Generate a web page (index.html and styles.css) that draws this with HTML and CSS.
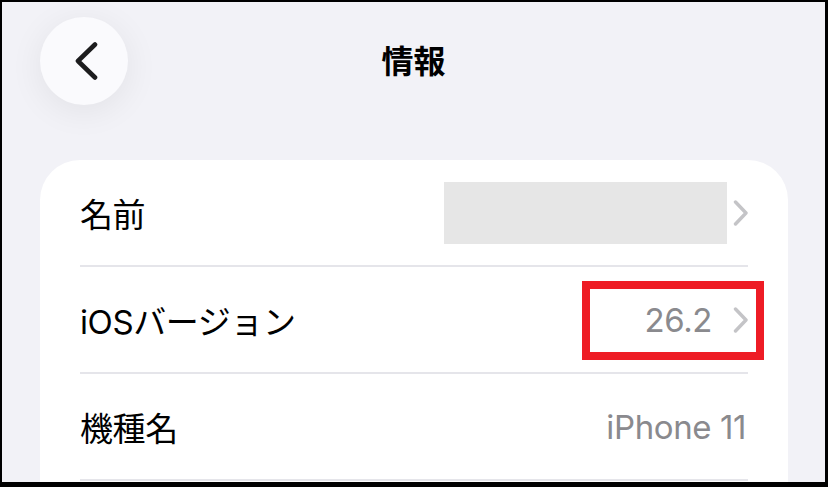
FILE: index.html
```html
<!DOCTYPE html>
<html lang="ja">
<head>
<meta charset="utf-8">
<title>情報</title>
<link rel="stylesheet" href="styles.css">
</head>
<body>
<div class="screen">
  <header class="nav">
    <button class="back" aria-label="戻る">
      <svg width="24" height="38" viewBox="0 0 24 38"><path d="M21 2.5 L4 19 L21 35.5" fill="none" stroke="#1c1c1e" stroke-width="4.6" stroke-linecap="round" stroke-linejoin="round"/></svg>
    </button>
    <h1 class="title">情報</h1>
    <div></div>
  </header>
  <section class="card">
    <div class="row">
      <span class="label">名前</span>
      <span class="value">
        <span class="blank"></span>
        <svg class="chev" width="16" height="26" viewBox="0 0 16 26"><path d="M2.5 2 L13 13 L2.5 24" fill="none" stroke="#c4c4c7" stroke-width="3.4" stroke-linecap="round" stroke-linejoin="round"/></svg>
      </span>
    </div>
    <div class="row">
      <span class="label">iOSバージョン</span>
      <span class="value">
        <span class="val">26.2</span>
        <svg class="chev" width="16" height="26" viewBox="0 0 16 26"><path d="M2.5 2 L13 13 L2.5 24" fill="none" stroke="#c4c4c7" stroke-width="3.4" stroke-linecap="round" stroke-linejoin="round"/></svg>
      </span>
      <span class="mark"></span>
    </div>
    <div class="row">
      <span class="label">機種名</span>
      <span class="value"><span class="val">iPhone 11</span></span>
    </div>
  </section>
</div>
</body>
</html>
```
FILE: styles.css
```css
html {
  background: #000;
}
body {
  margin: 0;
  font-family: Inter, "Noto Sans CJK JP", sans-serif;
}
.screen {
  margin: 2px 3px 0 2px;
  height: 480px;
  background: #f2f2f7;
  overflow: hidden;
}
.nav {
  display: grid;
  grid-template-columns: 1fr auto 1fr;
  align-items: center;
  padding: 15px 0 0 0;
  height: 88px;
}
.back {
  width: 88px;
  height: 88px;
  border-radius: 50%;
  border: none;
  padding: 0 0 0 4px;
  background: #fafafd;
  box-shadow: 0 6px 34px rgba(0, 0, 0, 0.07);
  display: flex;
  align-items: center;
  justify-content: center;
  margin-left: 38px;
  justify-self: start;
}
.title {
  margin: 0 0 4px 0;
  font-size: 32px;
  font-weight: 700;
  color: #000;
}
.card {
  margin: 55px 0 0 38px;
  width: 748px;
  background: #fff;
  border-radius: 40px;
  padding: 0 40px;
  box-sizing: border-box;
  height: 360px;
}
.row {
  position: relative;
  display: flex;
  align-items: center;
  justify-content: space-between;
  height: 105px;
  border-bottom: 2px solid #e5e5ea;
  font-size: 33px;
  letter-spacing: -0.4px;
}
.label {
  color: #000;
}
.value {
  display: flex;
  align-items: center;
  color: #8a8a8e;
}
.val {
  margin-right: 2px;
}
.blank {
  width: 283px;
  height: 62px;
  background: #e6e6e6;
  margin-right: 6px;
}
.val + .chev {
  margin-left: 19px;
  margin-right: -1px;
}
.blank + .chev {
  margin-right: -1px;
}
.mark {
  position: absolute;
  right: -16px;
  top: 14px;
  width: 182px;
  height: 79px;
  box-sizing: border-box;
  border: 8px solid #ee1c25;
}
```
